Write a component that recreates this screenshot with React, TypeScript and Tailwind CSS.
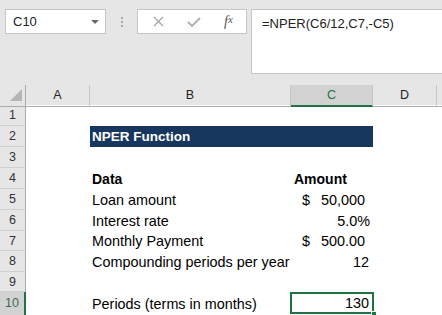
import type { ReactNode } from 'react'

type Row = { n: number; h: string; b?: ReactNode; c?: ReactNode; span?: boolean; active?: boolean }

function Dollar({ v }: { v: string }) {
  return (
    <div className="flex h-full items-center justify-between pl-[11px] pr-[8px]">
      <span>$</span>
      <span>{v}</span>
    </div>
  )
}

const rows: Row[] = [
  { n: 1, h: 'h-[21px]' },
  {
    n: 2,
    h: 'h-[21px]',
    span: true,
    b: (
      <div className="flex h-full items-center bg-[#17375e] pl-[2px] text-[13.5px] font-bold text-white">NPER Function</div>
    ),
  },
  { n: 3, h: 'h-[21px]' },
  {
    n: 4,
    h: 'h-[21px]',
    b: <div className="flex h-full items-center pl-[2px] text-[14px] font-bold">Data</div>,
    c: <div className="flex h-full items-center pl-[3px] text-[14px] font-bold">Amount</div>,
  },
  {
    n: 5,
    h: 'h-[21px]',
    b: <div className="flex h-full items-center pl-[2px]">Loan amount</div>,
    c: <Dollar v="50,000" />,
  },
  {
    n: 6,
    h: 'h-[21px]',
    b: <div className="flex h-full items-center pl-[2px]">Interest rate</div>,
    c: <div className="flex h-full items-center justify-end pr-[3px]">5.0%</div>,
  },
  {
    n: 7,
    h: 'h-[20px]',
    b: <div className="flex h-full items-center pl-[2px]">Monthly Payment</div>,
    c: <Dollar v="500.00" />,
  },
  {
    n: 8,
    h: 'h-[21px]',
    b: <div className="flex h-full items-center whitespace-nowrap pl-[2px]">Compounding periods per year</div>,
    c: <div className="flex h-full items-center justify-end pr-[4px]">12</div>,
  },
  { n: 9, h: 'h-[20px]' },
  {
    n: 10,
    h: 'h-[24px]',
    active: true,
    b: <div className="flex h-full items-center whitespace-nowrap pl-[2px]">Periods (terms in months)</div>,
    c: (
      <div className="relative h-full">
        <div className="flex h-[21px] items-center justify-end pr-[4px]">130</div>
        {/* selection outline + fill handle */}
        <div className="absolute -left-px top-0 h-[22px] w-[84px] border-2 border-[#217346]" />
        <div className="absolute left-[80px] top-[19px] h-[6px] w-[6px] border border-white bg-[#217346]" />
      </div>
    ),
  },
]

export default function App() {
  return (
    <div className="h-[315px] w-[442px] overflow-hidden bg-white font-['Liberation_Sans',Arial,sans-serif] text-black">
      {/* name box + formula bar */}
      <div className="flex h-[85px] items-start bg-[#e6e6e6] pl-[5px] pt-[9px]">
        <div className="flex h-[25px] w-[101px] items-center justify-between border border-[#c6c6c6] bg-white pl-[7px] pr-[6px] text-[13px] text-[#222]">
          <span>C10</span>
          <svg width="8" height="4" viewBox="0 0 8 4">
            <path d="M0 0h8L4 4z" fill="#6a6a6a" />
          </svg>
        </div>
        <div className="flex h-[25px] w-[31px] flex-col items-center justify-center gap-[2px]">
          <span className="h-[2px] w-[2px] bg-[#a9a9a9]" />
          <span className="h-[2px] w-[2px] bg-[#a9a9a9]" />
          <span className="h-[2px] w-[2px] bg-[#a9a9a9]" />
        </div>
        <div className="flex h-[25px] w-[110px] items-center border border-[#c6c6c6] bg-white pl-[3px]">
          <div className="flex w-[35px] justify-center">
            <svg width="11" height="11" viewBox="0 0 11 11">
              <path d="M1 1l9 9M10 1l-9 9" stroke="#a6a6a6" strokeWidth="1.3" />
            </svg>
          </div>
          <div className="flex w-[35px] justify-center">
            <svg width="14" height="10" viewBox="0 0 14 10">
              <path d="M1 5l4 4L13 1" stroke="#b3b3b3" strokeWidth="2" fill="none" />
            </svg>
          </div>
          <div className="flex w-[35px] justify-center font-['Liberation_Serif',serif] text-[14px] italic text-[#555]">
            f<span className="text-[11px]">x</span>
          </div>
        </div>
        <div className="ml-[4px] h-[65px] flex-1 border border-r-0 border-[#c6c6c6] bg-white pl-[10px] pt-[6px] text-[13px] leading-[16px] text-[#222]">
          =NPER(C6/12,C7,-C5)
        </div>
      </div>

      {/* column headers */}
      <div className="grid h-[20px] grid-cols-[26px_64px_201px_82px_64px_1fr] bg-[#e6e6e6] text-[12.5px] text-[#222]">
        <div className="relative border-b border-r border-[#ababab]">
          <svg className="absolute left-0 top-0" width="25" height="19" viewBox="0 0 25 19">
            <path d="M22 4v12H10z" fill="#b5b5b5" />
          </svg>
        </div>
        <div className="flex items-center justify-center border-b border-r border-b-[#ababab] border-r-[#c6c6c6]">A</div>
        <div className="flex items-center justify-center border-b border-r border-b-[#ababab] border-r-[#c6c6c6]">B</div>
        <div className="flex items-center justify-center border-b-2 border-r border-b-[#217346] border-r-[#c6c6c6] bg-[#d2d2d2] pt-[1px] text-[#217346]">
          C
        </div>
        <div className="flex items-center justify-center border-b border-r border-b-[#ababab] border-r-[#c6c6c6]">D</div>
        <div className="border-b border-[#ababab]" />
      </div>

      {/* sheet body */}
      <div className="text-[14.4px] leading-[16px]">
        {rows.map((r) => (
          <div key={r.n} className={`grid grid-cols-[26px_64px_201px_82px_64px_1fr] ${r.h}`}>
            <div
              className={
                r.active
                  ? 'flex items-start justify-center border-r-2 border-r-[#217346] bg-[#d2d2d2] pt-[3px] text-[12.5px] text-[#3e6b52]'
                  : 'flex items-center justify-center border-b border-r border-b-[#d0d0d0] border-r-[#ababab] bg-[#e6e6e6] text-[12.5px] text-[#333]'
              }
            >
              {r.n}
            </div>
            <div />
            {r.span ? (
              <div className="col-span-2">{r.b}</div>
            ) : (
              <>
                <div>{r.b}</div>
                <div>{r.c}</div>
              </>
            )}
            <div />
            <div />
          </div>
        ))}
      </div>
    </div>
  )
}
